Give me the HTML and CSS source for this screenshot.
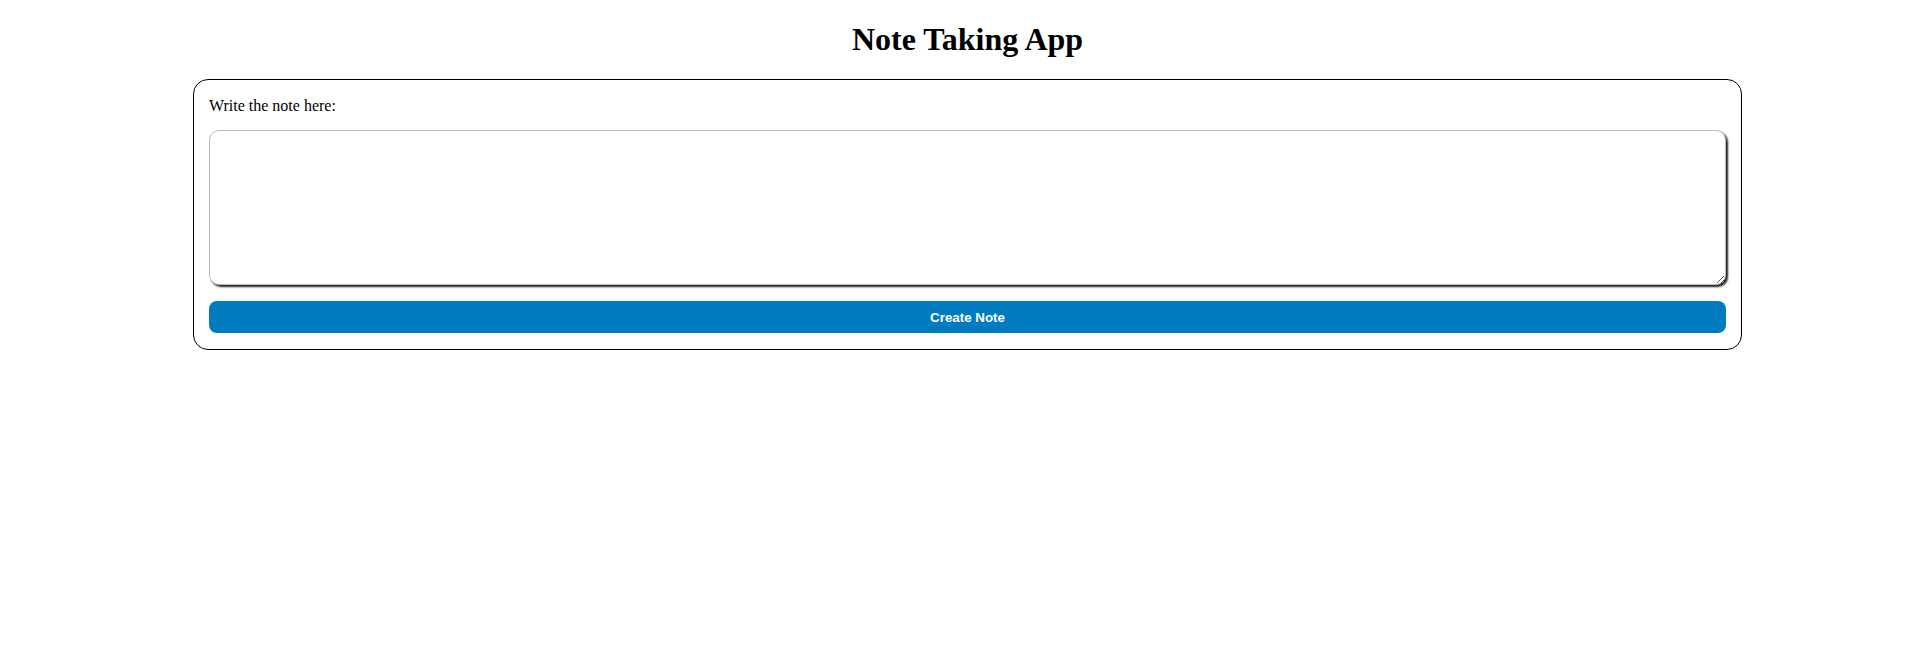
FILE: index.html
```html
<!DOCTYPE html>
<html>
<head>
<meta charset="utf-8">
<title>Note Taking App</title>
<link rel="stylesheet" href="styles.css">
</head>
<body>
<div class="app">
  <h1 class="title">Note Taking App</h1>
  <div class="card">
    <label class="label" for="note">Write the note here:</label>
    <textarea id="note" class="note-input"></textarea>
    <button class="create-btn">Create Note</button>
  </div>
</div>
</body>
</html>
```
FILE: styles.css
```css
body {
  margin: 0;
  font-family: "Liberation Serif", "Times New Roman", serif;
  background: #fff;
  color: #000;
}
.app {
  width: 1549px;
  margin-left: 193px;
  padding-top: 21px;
}
.title {
  font-size: 32px;
  font-weight: bold;
  text-align: center;
  line-height: 37px;
  margin: 0 0 21px;
}
.card {
  border: 1px solid #000;
  border-radius: 15px;
  padding: 15px 15px 16px;
  display: flex;
  flex-direction: column;
}
.label {
  display: block;
  font-size: 16px;
  line-height: 18px;
  padding-top: 2px;
  margin-bottom: 15px;
}
.note-input {
  box-sizing: border-box;
  width: 100%;
  height: 155px;
  border: 1px solid #bbb;
  border-radius: 10px;
  box-shadow: 2px 2px 2px #222;
  padding: 4px;
  margin: 0;
  font-family: "Liberation Mono", monospace;
  font-size: 13px;
  outline: none;
}
.create-btn {
  margin-top: 16px;
  height: 32px;
  width: 100%;
  border: none;
  border-radius: 8px;
  background: #007bc0;
  color: #fff;
  font-family: "Liberation Sans", Arial, sans-serif;
  font-weight: bold;
  font-size: 13.33px;
  cursor: pointer;
}
```
